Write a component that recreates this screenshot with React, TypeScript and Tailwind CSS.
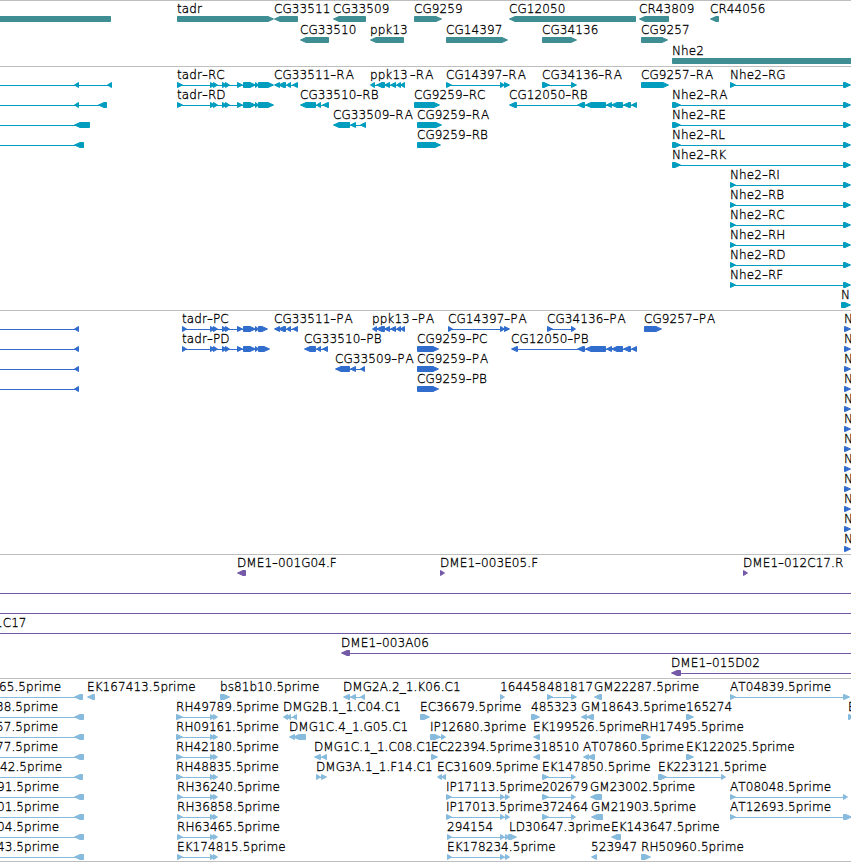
import React from 'react';

type Span = [number, number];

interface Feature {
  label?: string;
  x: number;
  row: number;
  dir: 1 | -1;
  spans: Span[];
}

interface TrackData {
  name: string;
  height: number;
  pitch: number;
  color: string;
  features: Feature[];
}

const WIDTH = 851;

// Shorthand: label, label x, row, strand, exon spans
const f = (label: string, x: number, row: number, dir: 1 | -1, ...spans: Span[]): Feature => ({
  label,
  x,
  row,
  dir,
  spans,
});

const tadrBody: Span[] = [[210, 215], [213, 218], [222, 227], [225, 230], [237, 243], [243, 256]];
const ppkBody: Span[] = [[376, 385], [384, 390], [390, 396], [396, 401], [400, 405]];
const cg12050Body: Span[] = [[577, 585], [585, 606], [606, 612], [611, 623], [623, 631], [631, 637]];
const cg33511: Span[] = [[274, 280], [278, 286], [286, 291], [292, 298]];

const genes: Feature[] = [
  f('', 0, 0, -1, [-20, 111]),
  f('tadr', 177, 0, 1, [177, 274]),
  f('CG33511', 274, 0, -1, [274, 298]),
  f('CG33509', 333, 0, -1, [333, 366]),
  f('CG9259', 414, 0, 1, [414, 442]),
  f('CG12050', 509, 0, -1, [509, 636]),
  f('CR43809', 639, 0, -1, [639, 669]),
  f('CR44056', 710, 0, -1, [710, 719]),
  f('CG33510', 300, 1, -1, [300, 329]),
  f('ppk13', 370, 1, -1, [370, 404]),
  f('CG14397', 446, 1, 1, [446, 508]),
  f('CG34136', 542, 1, 1, [542, 577]),
  f('CG9257', 641, 1, 1, [641, 668]),
  f('Nhe2', 672, 2, 1, [672, 880]),
];

const transcripts: Feature[] = [
  f('', 0, 0, -1, [-20, -10], [74, 79], [107, 112]),
  f('', 0, 1, -1, [-20, -10], [74, 79], [98, 107]),
  f('', 0, 2, -1, [-20, -10], [74, 90]),
  f('', 0, 3, -1, [-20, -10], [74, 84]),
  f('tadr-RC', 177, 0, 1, [177, 183], ...tadrBody, [255, 259], [258, 274]),
  f('tadr-RD', 177, 1, 1, [177, 183], ...tadrBody, [255, 259], [258, 274]),
  f('CG33511-RA', 274, 0, -1, ...cg33511),
  f('CG33510-RB', 300, 1, -1, [300, 316], [316, 321], [322, 329]),
  f('CG33509-RA', 333, 2, -1, [333, 350], [350, 356], [360, 366]),
  f('ppk13-RA', 370, 0, -1, [370, 375], ...ppkBody),
  f('CG14397-RA', 446, 0, 1, [446, 452], [500, 505], [504, 510]),
  f('CG9259-RC', 414, 1, 1, [414, 440]),
  f('CG9259-RA', 417, 2, 1, [417, 442]),
  f('CG9259-RB', 417, 3, 1, [417, 441]),
  f('CG34136-RA', 542, 0, 1, [542, 550], [571, 577]),
  f('CG12050-RB', 509, 1, -1, [509, 517], ...cg12050Body),
  f('CG9257-RA', 641, 0, 1, [641, 669]),
  f('Nhe2-RG', 730, 0, 1, [730, 736], [843, 851]),
  ...['RA', 'RE', 'RL', 'RK'].map((s, i) => f(`Nhe2-${s}`, 672, i + 1, 1, [672, 681], [843, 851])),
  ...['RI', 'RB', 'RC', 'RH', 'RD', 'RF'].map((s, i) => f(`Nhe2-${s}`, 730, i + 5, 1, [730, 736], [843, 851])),
  f('N', 841, 11, 1, [841, 851]),
];

const proteins: Feature[] = [
  ...[0, 1, 2, 3].map((row) => f('', 0, row, -1, [-20, -10], [74, 79])),
  f('tadr-PC', 182, 0, 1, [182, 187], ...tadrBody, [255, 259], [258, 268]),
  f('tadr-PD', 182, 1, 1, [182, 187], ...tadrBody, [255, 259], [258, 270]),
  f('CG33511-PA', 274, 0, -1, ...cg33511),
  f('CG33510-PB', 304, 1, -1, [304, 316], [316, 321], [322, 328]),
  f('CG33509-PA', 335, 2, -1, [335, 350], [350, 356], [360, 365]),
  f('ppk13-PA', 372, 0, -1, [372, 377], ...ppkBody),
  f('CG14397-PA', 448, 0, 1, [448, 453], [500, 505], [504, 510]),
  f('CG9259-PC', 417, 1, 1, [417, 439]),
  f('CG9259-PA', 417, 2, 1, [417, 439]),
  f('CG9259-PB', 417, 3, 1, [417, 439]),
  f('CG34136-PA', 547, 0, 1, [547, 553], [571, 576]),
  f('CG12050-PB', 511, 1, -1, [511, 518], ...cg12050Body),
  f('CG9257-PA', 644, 0, 1, [644, 662]),
  ...Array.from({ length: 12 }, (_, row) => f('N', 844, row, 1, [844, 851])),
];

const clones: Feature[] = [
  f('DME1-001G04.F', 237, 0, -1, [237, 246]),
  f('DME1-003E05.F', 440, 0, 1, [440, 445]),
  f('DME1-012C17.R', 743, 0, 1, [743, 748]),
  f('', 0, 1, 1, [-20, -10], [870, 880]),
  f('', 0, 2, 1, [-20, -10], [870, 880]),
  f('1C17', -5, 3, 1, [-20, -10], [870, 880]),
  f('DME1-003A06', 341, 4, -1, [341, 350], [870, 880]),
  f('DME1-015D02', 671, 5, -1, [671, 681], [870, 880]),
];

const leftEsts: [string, number, number][] = [
  ['65.5prime', -1, 83],
  ['38.5prime', -4, 84],
  ['57.5prime', -4, 84],
  ['77.5prime', -4, 84],
  ['42.5prime', 0, 83],
  ['91.5prime', -3, 84],
  ['01.5prime', -3, 84],
  ['04.5prime', -3, 84],
  ['43.5prime', -3, 84],
];

const ests: Feature[] = [
  ...leftEsts.map(([label, x, end], row) => f(label, x, row, -1, [-20, -10], [74, end])),
  f('EK167413.5prime', 87, 0, -1, [87, 95]),
  f('bs81b10.5prime', 220, 0, 1, [220, 230]),
  f('DMG2A.2_1.K06.C1', 343, 0, -1, [343, 350], [350, 356], [360, 365]),
  f('164458', 500, 0, 1, [500, 505]),
  f('481817', 547, 0, 1, [547, 553], [571, 577]),
  f('GM22287.5prime', 594, 0, -1, [594, 602]),
  f('AT04839.5prime', 730, 0, 1, [730, 736], [843, 850]),

  ...['RH49789', 'RH09161', 'RH42180', 'RH48835'].map((s, i) =>
    f(`${s}.5prime`, 176, i + 1, 1, [176, 183], [210, 215], [213, 218]),
  ),
  ...['RH36240', 'RH36858', 'RH63465', 'EK174815'].map((s, i) =>
    f(`${s}.5prime`, 177, i + 5, 1, [177, 183], [210, 215], [213, 218]),
  ),

  f('DMG2B.1_1.C04.C1', 283, 1, -1, [283, 288], [286, 291], [292, 297]),
  f('EC36679.5prime', 420, 1, 1, [420, 430]),
  f('485323', 531, 1, 1, [531, 540]),
  f('GM18643.5prime', 581, 1, -1, [581, 587], [586, 594]),
  f('165274', 686, 1, 1, [686, 694]),
  f('E', 848, 1, 1, [848, 855]),

  f('DMG1C.4_1.G05.C1', 289, 2, -1, [289, 295], [293, 306]),
  f('IP12680.3prime', 430, 2, 1, [430, 441], [441, 446]),
  f('EK199526.5prime', 533, 2, -1, [533, 540]),
  f('RH17495.5prime', 641, 2, 1, [641, 651]),

  f('DMG1C.1_1.C08.C1', 314, 3, -1, [314, 321], [321, 327]),
  f('EC22394.5prime', 431, 3, 1, [431, 438]),
  f('318510', 533, 3, -1, [533, 540]),
  f('AT07860.5prime', 583, 3, -1, [583, 589], [587, 595]),
  f('EK122025.5prime', 686, 3, 1, [686, 694]),

  f('DMG3A.1_1.F14.C1', 316, 4, 1, [316, 321], [321, 327]),
  f('EC31609.5prime', 437, 4, -1, [437, 442], [441, 446]),
  f('EK147850.5prime', 542, 4, 1, [542, 549], [571, 576]),
  f('EK223121.5prime', 658, 4, 1, [658, 667], [721, 726]),

  f('IP17113.5prime', 446, 5, 1, [446, 452], [500, 505], [505, 510]),
  f('202679', 542, 5, 1, [542, 549], [571, 576]),
  f('GM23002.5prime', 590, 5, -1, [590, 602]),
  f('AT08048.5prime', 730, 5, 1, [730, 736], [843, 848]),

  f('IP17013.5prime', 446, 6, 1, [446, 452], [500, 505], [505, 510]),
  f('372464', 542, 6, 1, [542, 549], [571, 576]),
  f('GM21903.5prime', 591, 6, -1, [591, 603]),
  f('AT12693.5prime', 730, 6, 1, [730, 736], [843, 852]),

  f('294154', 447, 7, 1, [447, 452], [500, 505], [505, 510]),
  f('LD30647.3prime', 509, 7, 1, [508, 517]),
  f('EK143647.5prime', 611, 7, -1, [611, 621]),

  f('EK178234.5prime', 447, 8, 1, [447, 452], [500, 505], [505, 510]),
  f('523947', 591, 8, -1, [591, 597]),
  f('RH50960.5prime', 641, 8, 1, [641, 651]),
];

const tracks: TrackData[] = [
  { name: 'Genes', height: 66, pitch: 21, color: '#3e8e94', features: genes },
  { name: 'Transcripts', height: 244, pitch: 20, color: '#009dbf', features: transcripts },
  { name: 'Proteins', height: 244, pitch: 20, color: '#316dcd', features: proteins },
  { name: 'Clones', height: 124, pitch: 20, color: '#7459a7', features: clones },
  { name: 'ESTs', height: 183, pitch: 20, color: '#87bbdd', features: ests },
];

// Box with a pointed end on the strand side; inset by half of its 1px outline
const exonPoints = ([a, b]: Span, dir: 1 | -1, top: number) => {
  const head = Math.min(b - a - 0.5, 6);
  const left = a + 0.5;
  const right = b - 0.5;
  const y1 = top + 0.5;
  const y2 = top + 5.5;
  if (dir === 1) {
    return `${left},${y1} ${b - head},${y1} ${right},${top + 3} ${b - head},${y2} ${left},${y2}`;
  }
  return `${right},${y1} ${a + head},${y1} ${left},${top + 3} ${a + head},${y2} ${right},${y2}`;
};

// The hyphen is stretched to 6px; a trailing "A" sits a little apart
const Label = ({ text, x, y }: { text: string; x: number; y: number }) => {
  const [stem, suffix] = text.split('-');
  return (
    <text x={x} y={y} className="fill-black stroke-black [stroke-width:0.3px] tracking-[0.07px]">
      {stem}
      {suffix && (
        <>
          <tspan dx={stem === 'ppk13' ? 2 : 0} textLength={6} lengthAdjust="spacingAndGlyphs">
            -
          </tspan>
          <tspan className={/^[RP]A$/.test(suffix) ? 'tracking-[1px]' : ''}>{suffix}</tspan>
        </>
      )}
    </text>
  );
};

const FeatureGlyph = ({ feature, pitch, color }: { feature: Feature; pitch: number; color: string }) => {
  const { spans, dir, row, label, x } = feature;
  const top = row * pitch + 16;
  const start = spans[0][0];
  const end = spans[spans.length - 1][1];

  return (
    <g>
      {spans.length > 1 && (
        <rect x={start + 2} y={top + 3} width={end - start - 4} height={1} shapeRendering="crispEdges" />
      )}
      {spans.map((span, i) => (
        <polygon key={i} points={exonPoints(span, dir, top)} stroke={color} strokeWidth={1} />
      ))}
      {label && <Label text={label} x={x} y={top - 3} />}
    </g>
  );
};

const Track = ({ track }: { track: TrackData }) => (
  <section aria-label={track.name} className="border-t border-[#bebebe] overflow-hidden">
    <svg
      width={WIDTH}
      height={track.height - 1}
      viewBox={`0 1 ${WIDTH} ${track.height - 1}`}
      fill={track.color}
      className="block"
    >
      {track.features.map((feature, i) => (
        <FeatureGlyph key={i} feature={feature} pitch={track.pitch} color={track.color} />
      ))}
    </svg>
  </section>
);

const App = () => {
  return (
    <main className="w-[851px] h-[862px] overflow-hidden bg-white border-b border-[#bebebe] font-['DejaVu_Sans',sans-serif] text-[12px] font-extralight [font-kerning:none]">
      {tracks.map((track) => (
        <Track key={track.name} track={track} />
      ))}
    </main>
  );
};

export default App;
